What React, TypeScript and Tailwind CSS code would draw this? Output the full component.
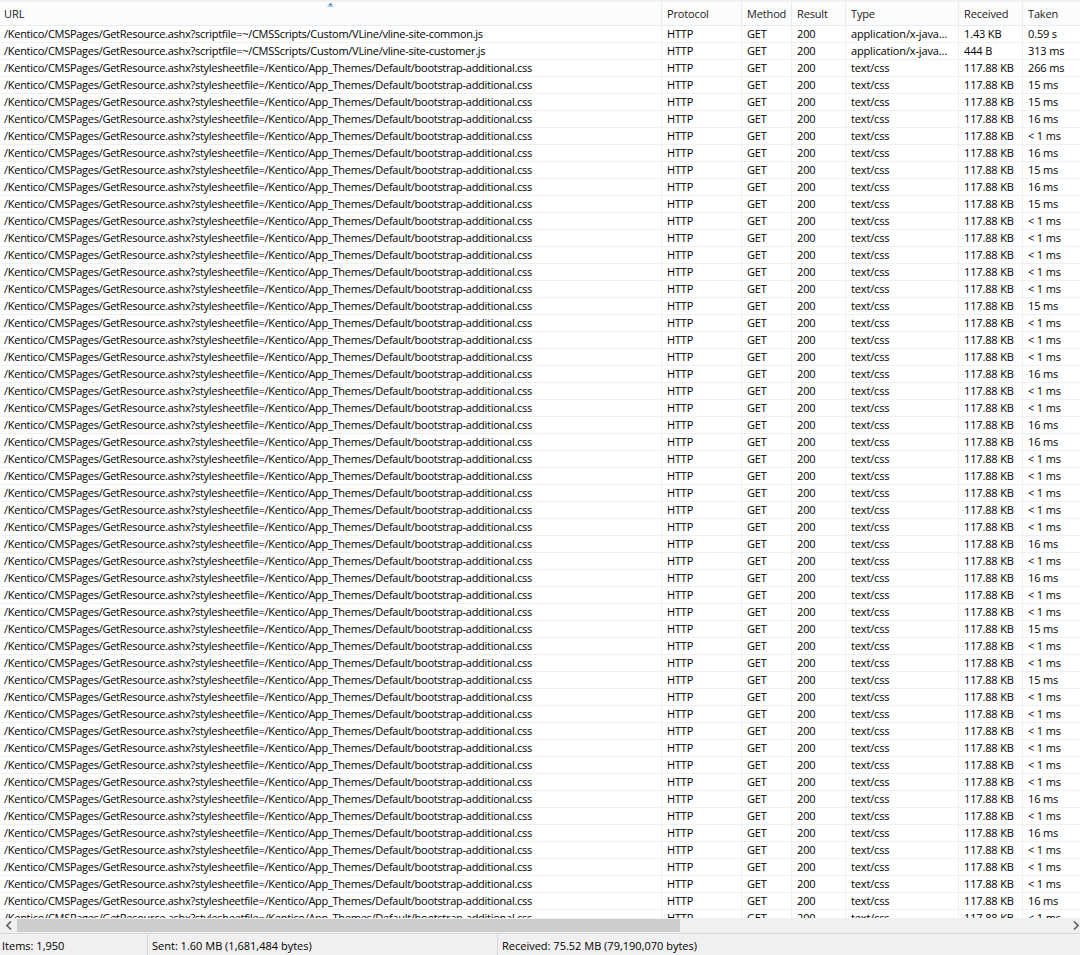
import React from "react";

const taken: string[] = [
  "0.59 s", "313 ms", "266 ms", "15 ms", "15 ms", "16 ms", "< 1 ms", "16 ms", "15 ms", "16 ms",
  "15 ms", "< 1 ms", "< 1 ms", "< 1 ms", "< 1 ms", "< 1 ms", "15 ms", "< 1 ms", "< 1 ms", "< 1 ms",
  "16 ms", "< 1 ms", "< 1 ms", "16 ms", "16 ms", "< 1 ms", "< 1 ms", "< 1 ms", "< 1 ms", "< 1 ms",
  "16 ms", "< 1 ms", "16 ms", "< 1 ms", "< 1 ms", "15 ms", "< 1 ms", "< 1 ms", "15 ms", "< 1 ms",
  "< 1 ms", "< 1 ms", "< 1 ms", "< 1 ms", "< 1 ms", "16 ms", "< 1 ms", "16 ms", "< 1 ms", "< 1 ms",
  "< 1 ms", "16 ms", "< 1 ms",
];

const CSS_URL = "/Kentico/CMSPages/GetResource.ashx?stylesheetfile=/Kentico/App_Themes/Default/bootstrap-additional.css";

type Row = { url: string; type: string; received: string; taken: string };

const rows: Row[] = taken.map((t, i) => {
  if (i === 0)
    return { url: "/Kentico/CMSPages/GetResource.ashx?scriptfile=~/CMSScripts/Custom/VLine/vline-site-common.js", type: "application/x-java…", received: "1.43 KB", taken: t };
  if (i === 1)
    return { url: "/Kentico/CMSPages/GetResource.ashx?scriptfile=~/CMSScripts/Custom/VLine/vline-site-customer.js", type: "application/x-java…", received: "444 B", taken: t };
  return { url: CSS_URL, type: "text/css", received: "117.88 KB", taken: t };
});

const cols = "grid grid-cols-[661px_80px_50px_54px_113px_64px_80px]";
const cell = "pl-[5px] border-l border-[#f0f0f0] whitespace-nowrap overflow-hidden tracking-[-0.15px]";
const hcell = "pl-[5px] pt-[2px] flex items-center border-l border-[#e5ecf5] tracking-[-0.15px]";

export default function App() {
  return (
    <div
      className="w-[1080px] h-[955px] overflow-hidden flex flex-col bg-white text-[11px] text-black"
      style={{ fontFamily: '"Open Sans", "Noto Sans", sans-serif' }}
    >
      <div className="h-[2px] bg-[#f0f0f0] shrink-0" />
      {/* header */}
      <div className={`${cols} h-[24px] shrink-0 bg-[#fcfcfc] border-b border-[#e5ecf5] relative text-[#1a1a1a]`}>
        <div className="pl-[4px] pt-[2px] flex items-center">URL</div>
        <div className={hcell}>Protocol</div>
        <div className={hcell}>Method</div>
        <div className={hcell}>Result</div>
        <div className={hcell}>Type</div>
        <div className={hcell}>Received</div>
        <div className={hcell}>Taken</div>
        <svg className="absolute left-[327px] top-[1px]" width="7" height="4" viewBox="0 0 7 4">
          <polygon points="3.5,0 7,4 0,4" fill="#9cc9ea" />
          <polygon points="3.5,0 5.2,2 1.8,2" fill="#3b6f99" />
        </svg>
      </div>
      {/* body */}
      <div className="h-[892px] shrink-0 overflow-hidden">
        {rows.map((r, i) => (
          <div key={i} className={`${cols} h-[17px] leading-[16px] border-b border-[#f0f0f0]`}>
            <div className="pl-[4px] whitespace-nowrap overflow-hidden tracking-[-0.27px]">{r.url}</div>
            <div className={cell}>HTTP</div>
            <div className={cell}>GET</div>
            <div className={cell}>200</div>
            <div className={cell}>{r.type}</div>
            <div className={cell}>{r.received}</div>
            <div className={cell}>{r.taken}</div>
          </div>
        ))}
      </div>
      {/* horizontal scrollbar */}
      <div className="h-[15px] shrink-0 bg-[#f0f0f0] flex items-center relative">
        <div className="w-[17px] h-full flex items-center justify-center shrink-0">
          <svg width="6" height="9" viewBox="0 0 6 9">
            <polyline points="5,0.5 1,4.5 5,8.5" fill="none" stroke="#606060" strokeWidth="1.6" />
          </svg>
        </div>
        <div className="w-[663px] h-[13px] bg-[#cdcdcd]" />
        <div className="absolute left-[1073px] top-[3px]">
          <svg width="6" height="9" viewBox="0 0 6 9">
            <polyline points="1,0.5 5,4.5 1,8.5" fill="none" stroke="#606060" strokeWidth="1.6" />
          </svg>
        </div>
      </div>
      {/* status bar */}
      <div className="flex-1 bg-[#f0f0f0] border-t border-[#d7d7d7] flex items-center">
        <div className="w-[148px] pl-[2px] pt-[3px] h-full flex items-center border-r border-[#d7d7d7]">Items: 1,950</div>
        <div className="w-[350px] pl-[4px] pt-[3px] h-full flex items-center border-r border-[#d7d7d7]">Sent: 1.60 MB (1,681,484 bytes)</div>
        <div className="pl-[4px] pt-[3px] h-full flex items-center">Received: 75.52 MB (79,190,070 bytes)</div>
      </div>
    </div>
  );
}
